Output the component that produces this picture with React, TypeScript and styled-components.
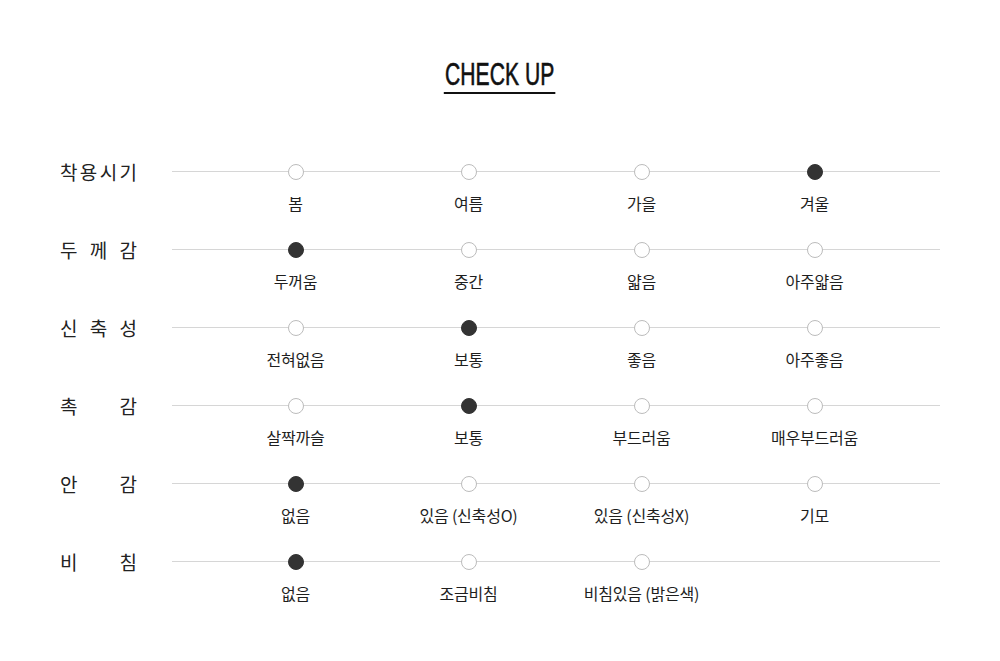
import React from 'react'
import styled, { createGlobalStyle } from 'styled-components'

const GlobalStyle = createGlobalStyle`
  html, body {
    margin: 0;
    padding: 0;
    background: #fff;
  }
  body {
    font-family: 'Noto Sans CJK KR', 'Noto Sans', sans-serif;
    color: #222;
  }
`

const Page = styled.div`
  width: 880px;
  margin: 0 auto;
  padding-top: 58px;
`

const TitleWrap = styled.div`
  display: flex;
  justify-content: center;
  margin-bottom: 62px;
`

// no condensed face installed, so squeeze a regular one
const Title = styled.h2`
  margin: 0;
  font-family: 'Liberation Sans', Arial, sans-serif;
  font-weight: 400;
  font-size: 32px;
  line-height: 32px;
  color: #111;
  border-bottom: 2px solid #111;
  padding: 0 2px 2px;
  transform: scaleX(0.66);
  -webkit-text-stroke: 0.6px #111;
`

const List = styled.div`
  display: flex;
  flex-direction: column;
`

const Row = styled.div`
  display: flex;
  height: 78px;
`

const Label = styled.div`
  display: flex;
  justify-content: space-between;
  width: 77px;
  margin-right: 35px;
  font-size: 19px;
  line-height: 24px;
  height: 24px;
  margin-top: 4px;
  color: #222;
`

const Track = styled.div`
  position: relative;
  flex: 1;
  display: grid;
  grid-template-columns: repeat(4, 173px);
  padding: 0 38px 0 37px;

  &::before {
    content: '';
    position: absolute;
    left: 0;
    right: 0;
    top: 15px;
    height: 1px;
    background: #d6d6d6;
  }
`

const Cell = styled.div`
  display: flex;
  flex-direction: column;
  align-items: center;
`

const Dot = styled.span<{ $on?: boolean }>`
  position: relative;
  z-index: 1;
  box-sizing: border-box;
  width: 16px;
  height: 16px;
  margin-top: 8px;
  border-radius: 50%;
  background: ${({ $on }) => ($on ? '#333' : '#fff')};
  border: 1px solid ${({ $on }) => ($on ? '#333' : '#bcbcbc')};
`

const Option = styled.span`
  margin-top: 12px;
  font-size: 16px;
  line-height: 22px;
  letter-spacing: -0.2px;
  color: #1e1e1e;
  white-space: nowrap;
`

const ROWS: { label: string; options: string[]; picked: number }[] = [
  { label: '착용시기', options: ['봄', '여름', '가을', '겨울'], picked: 3 },
  { label: '두께감', options: ['두꺼움', '중간', '얇음', '아주얇음'], picked: 0 },
  { label: '신축성', options: ['전혀없음', '보통', '좋음', '아주좋음'], picked: 1 },
  { label: '촉감', options: ['살짝까슬', '보통', '부드러움', '매우부드러움'], picked: 1 },
  { label: '안감', options: ['없음', '있음 (신축성O)', '있음 (신축성X)', '기모'], picked: 0 },
  { label: '비침', options: ['없음', '조금비침', '비침있음 (밝은색)'], picked: 0 },
]

export default function App() {
  return (
    <Page>
      <GlobalStyle />
      <TitleWrap>
        <Title>CHECK UP</Title>
      </TitleWrap>
      <List>
        {ROWS.map((row) => (
          <Row key={row.label}>
            <Label>
              {row.label.split('').map((ch, i) => (
                <span key={i}>{ch}</span>
              ))}
            </Label>
            <Track>
              {row.options.map((opt, i) => (
                <Cell key={opt + i}>
                  <Dot $on={i === row.picked} />
                  <Option>{opt}</Option>
                </Cell>
              ))}
            </Track>
          </Row>
        ))}
      </List>
    </Page>
  )
}
